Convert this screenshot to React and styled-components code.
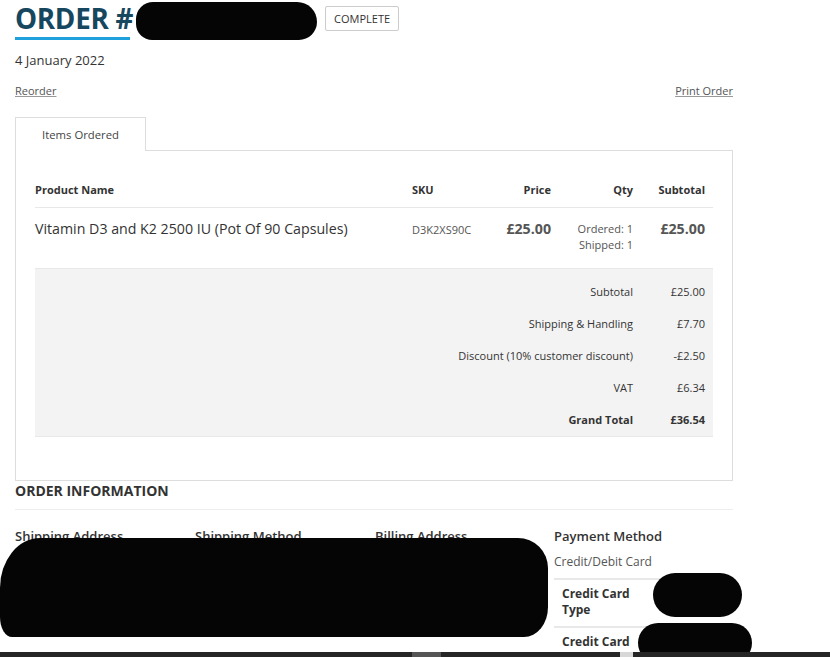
import React from "react";
import styled, { createGlobalStyle } from "styled-components";

const GlobalStyle = createGlobalStyle`
  html, body {
    margin: 0;
    padding: 0;
    background: #fff;
  }
  body {
    font-family: "Open Sans", "Liberation Sans", Arial, sans-serif;
    color: #333;
    overflow: hidden;
  }
`;

const Page = styled.div`
  position: relative;
  width: 718px;
  padding: 0 0 0 15px;
  height: 657px;
`;

const Header = styled.div`
  display: flex;
  align-items: flex-start;
`;

const Title = styled.h1`
  margin: 0;
  font-size: 27.8px;
  line-height: 37px;
  height: 35px;
  font-weight: 700;
  color: #17475f;
  letter-spacing: -0.3px;

  &::after {
    content: "";
    display: block;
    width: 115px;
    height: 3px;
    background: #1ea0dc;
  }
`;

const Scribble = styled.span`
  display: block;
  background: #050505;
  width: ${({ $w }) => $w}px;
  height: ${({ $h }) => $h}px;
  border-radius: ${({ $r }) => $r};
  margin: ${({ $m }) => $m || 0};
`;

const Overlay = styled(Scribble)`
  position: absolute;
  left: ${({ $x }) => $x}px;
  top: ${({ $y }) => $y}px;
`;

const Badge = styled.span`
  margin: 6px 0 0 8px;
  height: 23px;
  padding: 0 8px;
  display: inline-flex;
  align-items: center;
  border: 1px solid #ccc;
  border-radius: 2px;
  font-size: 11px;
  color: #333;
`;

const DateLine = styled.div`
  margin-top: 11px;
  font-size: 13px;
  line-height: 18px;
`;

const Actions = styled.div`
  display: flex;
  justify-content: space-between;
  margin-top: 14px;
`;

const ActionLink = styled.a`
  font-size: 11px;
  line-height: 16px;
  color: #555;
  text-decoration: underline;
  text-decoration-color: #999;
`;

const Tabs = styled.div`
  display: flex;
  margin-top: 18px;
`;

const Tab = styled.div`
  width: 129px;
  height: 33px;
  display: flex;
  align-items: center;
  justify-content: center;
  font-size: 11.3px;
  color: #444;
  border: 1px solid #ddd;
  border-bottom: none;
  background: #fff;
  position: relative;
  z-index: 1;
  margin-bottom: -1px;
`;

const Panel = styled.div`
  border: 1px solid #ddd;
  padding: 20px 19px 43px;
  height: 266px;
`;

const Row = styled.div`
  display: grid;
  grid-template-columns: 369px 76px 79px 82px 72px;
  border-bottom: 1px solid #e8e8e8;
`;

const HeadCell = styled.div`
  height: 36px;
  display: flex;
  align-items: center;
  justify-content: ${({ $right }) => ($right ? "flex-end" : "flex-start")};
  padding: ${({ $pad }) => $pad || "0 8px 0 0"};
  font-size: 11px;
  font-weight: 700;
`;

const Cell = styled.div`
  padding: ${({ $pad }) => $pad || "11px 8px 0 0"};
  height: 60px;
  box-sizing: border-box;
  text-align: ${({ $right }) => ($right ? "right" : "left")};
  font-size: ${({ $size }) => $size || 11}px;
  font-weight: ${({ $bold }) => ($bold ? 700 : 400)};
  line-height: ${({ $lh }) => $lh || 20}px;
  color: ${({ $color }) => $color || "#333"};
`;

const Totals = styled.div`
  background: #f3f3f3;
  padding: 6px 0 1px;
  border-bottom: 1px solid #e8e8e8;
`;

const TotalRow = styled.div`
  display: grid;
  grid-template-columns: 1fr 72px;
  height: 32px;
  align-items: center;
  font-size: 11px;
  font-weight: ${({ $bold }) => ($bold ? 700 : 400)};
`;

const TotalLabel = styled.div`
  text-align: right;
  padding-right: 8px;
`;

const TotalValue = styled.div`
  text-align: right;
  padding-right: 8px;
`;

const SectionTitle = styled.h2`
  margin: 0;
  font-size: 14px;
  line-height: 20px;
  font-weight: 700;
  padding-bottom: 8px;
  border-bottom: 1px solid #eee;
`;

const InfoGrid = styled.div`
  display: grid;
  grid-template-columns: 180px 180px 179px 179px;
  margin-top: 17px;
`;

const InfoHeading = styled.div`
  font-size: 13px;
  line-height: 18px;
  font-weight: 600;
  color: #333;
`;

const InfoText = styled.div`
  margin-top: 9px;
  font-size: 12px;
  line-height: 16px;
  color: #555;
`;

const CardTable = styled.div`
  margin-top: 8px;
  border-top: 2px solid #e8e8e8;
`;

const CardRow = styled.div`
  display: grid;
  grid-template-columns: 84px 1fr;
  border-bottom: 2px solid #e8e8e8;
  padding: 6px 0 8px 8px;
`;

const CardLabel = styled.div`
  font-size: 12px;
  line-height: 16px;
  font-weight: 700;
  color: #333;
`;

const BottomBar = styled.div`
  position: fixed;
  left: 0;
  right: 0;
  bottom: 0;
  height: 5px;
  background: #262626;
`;

const BarPiece = styled.span`
  position: absolute;
  top: 0;
  bottom: 0;
  left: ${({ $x }) => $x}px;
  width: ${({ $w }) => $w}px;
  background: ${({ $c }) => $c};
`;

const totals = [
  ["Subtotal", "£25.00"],
  ["Shipping & Handling", "£7.70"],
  ["Discount (10% customer discount)", "-£2.50"],
  ["VAT", "£6.34"],
];

export default function App() {
  return (
    <>
      <GlobalStyle />
      <Page>
        <Header>
          <Title>ORDER #</Title>
          <Scribble $w={181} $h={38} $r="19px 22px 20px 18px" $m="2px 0 0 3px" />
          <Badge>COMPLETE</Badge>
        </Header>
        <DateLine>4 January 2022</DateLine>
        <Actions>
          <ActionLink>Reorder</ActionLink>
          <ActionLink>Print Order</ActionLink>
        </Actions>

        <Tabs>
          <Tab>Items Ordered</Tab>
        </Tabs>
        <Panel>
          <Row>
            <HeadCell>Product Name</HeadCell>
            <HeadCell $pad="0 0 0 8px">SKU</HeadCell>
            <HeadCell $right>Price</HeadCell>
            <HeadCell $right>Qty</HeadCell>
            <HeadCell $right>Subtotal</HeadCell>
          </Row>
          <Row>
            <Cell $size={14.2}>Vitamin D3 and K2 2500 IU (Pot Of 90 Capsules)</Cell>
            <Cell $pad="12px 0 0 8px" $color="#555">D3K2XS90C</Cell>
            <Cell $right $bold $size={14.2} $color="#555">£25.00</Cell>
            <Cell $right $lh={16} $pad="13px 8px 0 0" $color="#555">
              Ordered: 1
              <br />
              Shipped: 1
            </Cell>
            <Cell $right $bold $size={14.2} $color="#555">£25.00</Cell>
          </Row>
          <Totals>
            {totals.map(([label, value]) => (
              <TotalRow key={label}>
                <TotalLabel>{label}</TotalLabel>
                <TotalValue>{value}</TotalValue>
              </TotalRow>
            ))}
            <TotalRow $bold>
              <TotalLabel>Grand Total</TotalLabel>
              <TotalValue>£36.54</TotalValue>
            </TotalRow>
          </Totals>
        </Panel>

        <SectionTitle>ORDER INFORMATION</SectionTitle>
        <InfoGrid>
          <div>
            <InfoHeading>Shipping Address</InfoHeading>
          </div>
          <div>
            <InfoHeading>Shipping Method</InfoHeading>
          </div>
          <div>
            <InfoHeading>Billing Address</InfoHeading>
          </div>
          <div>
            <InfoHeading>Payment Method</InfoHeading>
            <InfoText>Credit/Debit Card</InfoText>
            <CardTable>
              <CardRow>
                <CardLabel>Credit Card Type</CardLabel>
              </CardRow>
              <CardRow>
                <CardLabel>Credit Card</CardLabel>
              </CardRow>
            </CardTable>
          </div>
        </InfoGrid>

        <Overlay $x={0} $y={538} $w={548} $h={99} $r="40px 30px 24px 12px / 50px 30px 30px 20px" />
        <Overlay $x={653} $y={573} $w={89} $h={44} $r="22px" />
        <Overlay $x={638} $y={623} $w={114} $h={40} $r="22px" />
      </Page>
      <BottomBar>
        <BarPiece $x={412} $w={29} $c="#555" />
        <BarPiece $x={620} $w={13} $c="#d8d8d8" />
      </BottomBar>
    </>
  );
}
